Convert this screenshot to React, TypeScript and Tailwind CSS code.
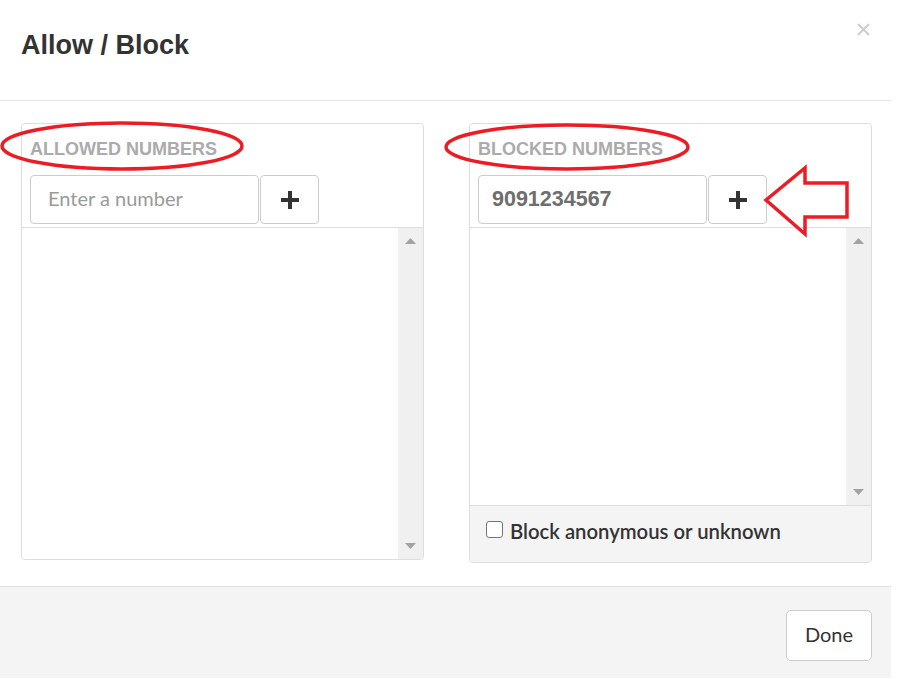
import { useState } from "react";

// ─── Small pieces ───────────────────────────────────────────────────────────────

function ScrollTrack() {
  return (
    <div className="w-[25px] bg-[#f0f0f0] flex flex-col items-center justify-between py-[10px]">
      <svg width="11" height="6" viewBox="0 0 11 6">
        <path d="M5.5 0 L11 6 L0 6 Z" fill="#a3a3a3" />
      </svg>
      <svg width="11" height="6" viewBox="0 0 11 6">
        <path d="M0 0 L11 0 L5.5 6 Z" fill="#a3a3a3" />
      </svg>
    </div>
  );
}

function NumberPanel({
  title,
  value,
  onChange,
  listHeight,
  inputPad,
  footer,
}: {
  title: string;
  value: string;
  onChange: (v: string) => void;
  listHeight: string;
  inputPad: string;
  footer?: React.ReactNode;
}) {
  return (
    <div className="border border-[#dddddd] rounded-[4px] bg-white overflow-hidden">
      <div className="pl-[8px] pt-[15px]">
        <h3 className="font-['Liberation_Sans',Arial,sans-serif] font-bold text-[18px] leading-[20px] text-[#ababab] uppercase">
          {title}
        </h3>
        <div className="flex items-center gap-[1px] mt-[16px] mb-[3px]">
          <input
            value={value}
            onChange={e => onChange(e.target.value)}
            placeholder="Enter a number"
            className={`w-[229px] h-[49px] border border-[#cccccc] rounded-[4px] ${inputPad} pr-[10px] font-['Liberation_Sans',Arial,sans-serif] font-bold text-[21.5px] text-[#6e6e6e] placeholder:font-['Lato',sans-serif] placeholder:font-normal placeholder:text-[20px] placeholder:text-[#9a9a9a] outline-none`}
          />
          <button className="w-[59px] h-[49px] border border-[#cccccc] rounded-[4px] bg-white flex items-center justify-center">
            <svg width="18" height="18" viewBox="0 0 18 18">
              <path d="M7 0h4v7h7v4h-7v7H7v-7H0V7h7z" fill="#333333" />
            </svg>
          </button>
        </div>
      </div>
      <div className={`flex border-t border-[#dddddd] ${listHeight}`}>
        <div className="flex-1 bg-white" />
        <ScrollTrack />
      </div>
      {footer}
    </div>
  );
}

// ─── Component ──────────────────────────────────────────────────────────────────

export default function App() {
  const [allowed, setAllowed] = useState("");
  const [blocked, setBlocked] = useState("9091234567");
  const [anon, setAnon] = useState(false);

  return (
    <div className="relative w-[898px] h-[688px] bg-white overflow-hidden">
      <div className="w-[891px]">
        {/* Header */}
        <div className="relative h-[101px] border-b border-[#e5e5e5] pl-[21px] pt-[27px]">
          <h2 className="font-['Liberation_Sans',Arial,sans-serif] font-bold text-[27px] leading-[36px] text-[#333333]">
            Allow / Block
          </h2>
          <button className="absolute right-[21px] top-[23px] p-0">
            <svg width="13" height="13" viewBox="0 0 13 13">
              <path d="M1 1L12 12M12 1L1 12" stroke="#cdcdcd" strokeWidth="2" />
            </svg>
          </button>
        </div>

        {/* Body */}
        <div className="grid grid-cols-2 gap-[45px] items-start pl-[21px] pr-[19px] pt-[22px] h-[485px]">
          <NumberPanel
            title="Allowed numbers"
            value={allowed}
            onChange={setAllowed}
            listHeight="h-[332px]"
            inputPad="pl-[17px]"
          />
          <NumberPanel
            title="Blocked numbers"
            value={blocked}
            onChange={setBlocked}
            listHeight="h-[278px]"
            inputPad="pl-[13px]"
            footer={
              <label className="flex items-center gap-[7px] h-[57px] border-t border-[#dddddd] bg-[#f4f4f4] pl-[16px] pb-[10px] cursor-pointer">
                <input
                  type="checkbox"
                  checked={anon}
                  onChange={e => setAnon(e.target.checked)}
                  className="appearance-none w-[17px] h-[17px] rounded-[3px] border-[1.5px] border-[#767676] bg-white"
                />
                <span className="font-['Lato',sans-serif] font-semibold text-[20.3px] leading-[24px] text-[#333333] pt-[3px]">
                  Block anonymous or unknown
                </span>
              </label>
            }
          />
        </div>

        {/* Footer */}
        <div className="h-[92px] border-t border-[#e5e5e5] bg-[#f4f4f4] flex items-start justify-end pt-[23px] pr-[19px]">
          <button className="w-[86px] h-[51px] bg-white border border-[#cccccc] rounded-[5px] pb-[3px] font-['Lato',sans-serif] text-[20px] text-[#333333]">
            Done
          </button>
        </div>
      </div>

      {/* Red annotations */}
      <svg
        className="absolute left-0 top-0 pointer-events-none"
        width="898"
        height="688"
        viewBox="0 0 898 688"
      >
        <ellipse cx="122" cy="146" rx="120" ry="23" fill="none" stroke="#ed1c24" strokeWidth="3.5" />
        <ellipse cx="567" cy="147" rx="121" ry="22" fill="none" stroke="#ed1c24" strokeWidth="3.5" />
        <polygon
          points="766,200 805,168 805,183 847,183 847,217 805,217 805,234"
          fill="none"
          stroke="#ed1c24"
          strokeWidth="3.5"
        />
      </svg>
    </div>
  );
}
